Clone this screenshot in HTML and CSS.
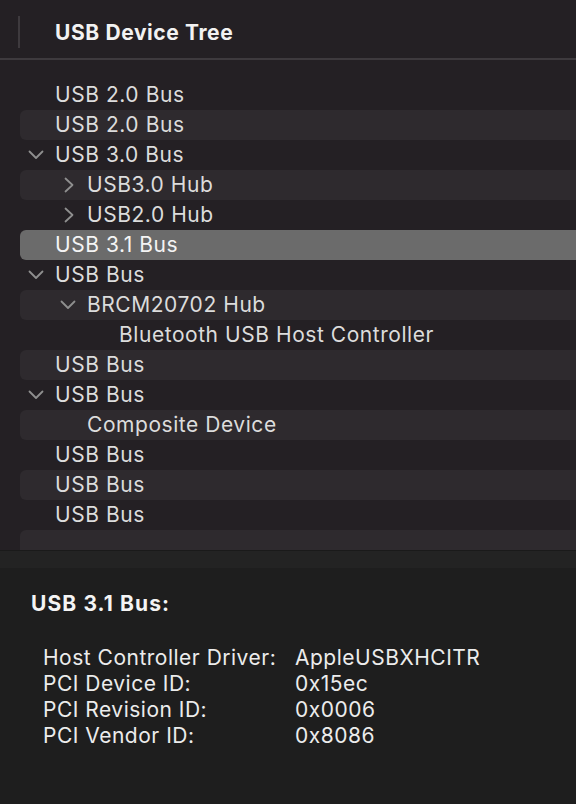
FILE: index.html
```html
<!DOCTYPE html>
<html>
<head>
<meta charset="utf-8">
<link rel="stylesheet" href="styles.css">
</head>
<body>
<div class="window">
  <div class="header">
    <div class="vdiv"></div>
    <div class="title">USB Device Tree</div>
  </div>
  <div class="hline"></div>
  <div class="tree">
    <div class="row l0"><span class="chev"></span><span class="label">USB 2.0 Bus</span></div>
    <div class="row l0 alt"><span class="chev"></span><span class="label">USB 2.0 Bus</span></div>
    <div class="row l0"><span class="chev"><svg viewBox="0 0 16 16" class="ic"><polyline points="1.5,4.5 8,11 14.5,4.5"/></svg></span><span class="label">USB 3.0 Bus</span></div>
    <div class="row l1 alt"><span class="chev"><svg viewBox="0 0 16 16" class="ic"><polyline points="5.5,1.5 12.5,8 5.5,14.5"/></svg></span><span class="label">USB3.0 Hub</span></div>
    <div class="row l1"><span class="chev"><svg viewBox="0 0 16 16" class="ic"><polyline points="5.5,1.5 12.5,8 5.5,14.5"/></svg></span><span class="label">USB2.0 Hub</span></div>
    <div class="row l0 sel"><span class="chev"></span><span class="label">USB 3.1 Bus</span></div>
    <div class="row l0"><span class="chev"><svg viewBox="0 0 16 16" class="ic"><polyline points="1.5,4.5 8,11 14.5,4.5"/></svg></span><span class="label">USB Bus</span></div>
    <div class="row l1 alt"><span class="chev"><svg viewBox="0 0 16 16" class="ic"><polyline points="1.5,4.5 8,11 14.5,4.5"/></svg></span><span class="label">BRCM20702 Hub</span></div>
    <div class="row l2"><span class="chev"></span><span class="label">Bluetooth USB Host Controller</span></div>
    <div class="row l0 alt"><span class="chev"></span><span class="label">USB Bus</span></div>
    <div class="row l0"><span class="chev"><svg viewBox="0 0 16 16" class="ic"><polyline points="1.5,4.5 8,11 14.5,4.5"/></svg></span><span class="label">USB Bus</span></div>
    <div class="row l1 alt"><span class="chev"></span><span class="label">Composite Device</span></div>
    <div class="row l0"><span class="chev"></span><span class="label">USB Bus</span></div>
    <div class="row l0 alt"><span class="chev"></span><span class="label">USB Bus</span></div>
    <div class="row l0"><span class="chev"></span><span class="label">USB Bus</span></div>
    <div class="row l0 alt"><span class="chev"></span><span class="label"></span></div>
  </div>
  <div class="band"></div>
  <div class="detail">
    <div class="dtitle">USB 3.1 Bus:</div>
    <div class="props">
      <div class="prop"><span class="k">Host Controller Driver:</span><span class="v">AppleUSBXHCITR</span></div>
      <div class="prop"><span class="k">PCI Device ID:</span><span class="v">0x15ec</span></div>
      <div class="prop"><span class="k">PCI Revision ID:</span><span class="v">0x0006</span></div>
      <div class="prop"><span class="k">PCI Vendor ID:</span><span class="v">0x8086</span></div>
    </div>
  </div>
</div>
</body>
</html>
```
FILE: styles.css
```css
html, body {
  margin: 0;
  padding: 0;
  width: 576px;
  height: 804px;
  overflow: hidden;
  background: #1e1e1e;
}
.window {
  display: flex;
  flex-direction: column;
  height: 804px;
  font-family: Inter, "Noto Sans", "Liberation Sans", sans-serif;
  color: #dedede;
}
.header {
  height: 58px;
  background: #242024;
  display: flex;
  align-items: center;
}
.vdiv {
  width: 2px;
  height: 32px;
  background: #3e3a3e;
  margin-left: 18px;
  margin-top: 6px;
}
.title {
  margin-left: 35px;
  font-size: 21px;
  font-weight: 700;
  color: #f2f2f2;
  margin-top: 6px;
  letter-spacing: 0.6px;
}
.hline {
  height: 2px;
  background: #3e3a3e;
}
.tree {
  background: #242024;
  height: 470px;
  padding-top: 20px;
  overflow: hidden;
}
.row {
  height: 30px;
  margin-left: 20px;
  border-radius: 6px 0 0 6px;
  display: flex;
  align-items: center;
  font-size: 21px;
  letter-spacing: 0.55px;
  color: #dcdcdc;
}
.row.alt { background: #2e2a2e; }
.row.sel { background: #6b6b6b; color: #f4f4f4; }
.row.l0 { padding-left: 8px; }
.row.l1 { padding-left: 40px; }
.row.l2 { padding-left: 72px; }
.chev {
  width: 27px;
  height: 16px;
  flex: none;
  display: flex;
}
.ic {
  width: 16px;
  height: 16px;
  fill: none;
  stroke: #8f8f8f;
  stroke-width: 1.8;
  stroke-linecap: round;
  stroke-linejoin: round;
}
.label {
  white-space: nowrap;
  padding-bottom: 2px;
}
.band {
  height: 17px;
  background: #232323;
  border-top: 1px solid #1a1a1a;
}
.detail {
  flex: 1;
  background: #1e1e1e;
  padding: 23px 0 0 31px;
}
.dtitle {
  font-size: 21px;
  font-weight: 700;
  letter-spacing: 1.1px;
  color: #f4f4f4;
}
.props {
  display: flex;
  flex-direction: column;
  margin-top: 29px;
  margin-left: 12px;
  font-size: 21px;
  letter-spacing: 0.5px;
  line-height: 26px;
  color: #ececec;
}
.prop {
  display: flex;
}
.k {
  width: 252px;
  flex: none;
  white-space: nowrap;
}
.v {
  white-space: nowrap;
}
```
